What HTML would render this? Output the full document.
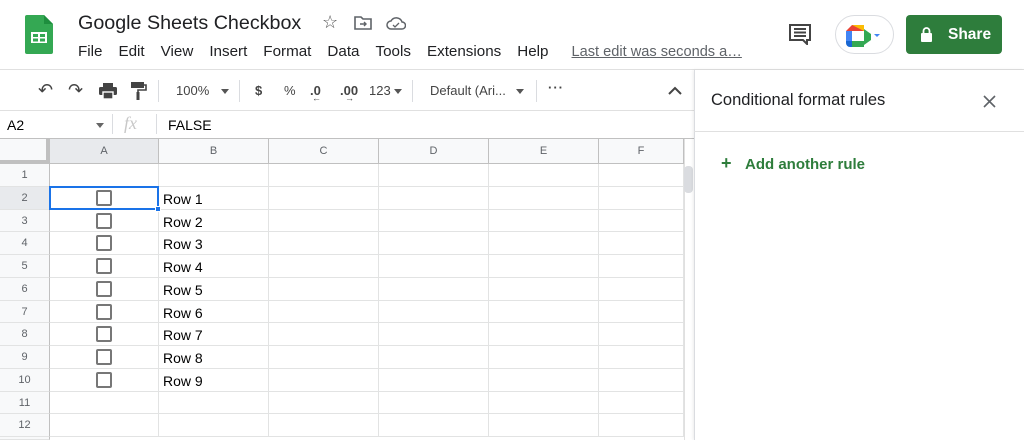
<!DOCTYPE html>
<html style="width:1024px;height:440px;overflow:hidden"><head><meta charset="utf-8"><style>
*{margin:0;padding:0;box-sizing:border-box}
body{width:1024px;height:440px;overflow:hidden;background:#fff;font-family:"Liberation Sans",Arial,sans-serif;position:relative;color:#3c4043}
.a{position:absolute}
.menu span{margin-right:16px}
.tb{font-size:13px;color:#444}
.sep{position:absolute;width:1px;background:#dadce0}
.cell{position:absolute;border-right:1px solid #e2e3e3;border-bottom:1px solid #e2e3e3}
.rh{position:absolute;left:0;width:50px;background:#f8f9fa;border-right:1px solid #c0c0c0;border-bottom:1px solid #e2e3e3;font-size:11px;color:#5f6368;text-align:center}
.ch{position:absolute;top:139px;height:25px;background:#f8f9fa;border-right:1px solid #c0c0c0;border-bottom:1px solid #c0c0c0;font-size:11px;color:#5f6368;text-align:center;line-height:24px}
.cb{position:absolute;left:96px;width:16px;height:16px;border:2px solid #777;border-radius:2px}
.rt{position:absolute;left:163px;font-size:14px;color:#000}
</style></head><body>
<svg class="a" style="left:25px;top:15px" width="28" height="39" viewBox="0 0 28 39"><path d="M2 0h17l9 9v28a2 2 0 0 1-2 2H2a2 2 0 0 1-2-2V2a2 2 0 0 1 2-2z" fill="#34a853"/><path d="M19 0v9h9z" fill="#1e8e3e"/><rect x="6" y="17" width="16" height="11" fill="#fff"/><rect x="8" y="19" width="5" height="3" fill="#34a853"/><rect x="15" y="19" width="5" height="3" fill="#34a853"/><rect x="8" y="23.5" width="5" height="3" fill="#34a853"/><rect x="15" y="23.5" width="5" height="3" fill="#34a853"/></svg>
<div class="a" style="left:78px;top:12px;font-size:19.7px;color:#202124">Google Sheets Checkbox</div>
<div class="a" style="left:322px;top:12px;font-size:18px;color:#555">☆</div>
<svg class="a" style="left:354px;top:16px" width="18" height="14" viewBox="0 0 18 14"><path d="M1 1h6l2 2h8v10H1z" fill="none" stroke="#5f6368" stroke-width="1.6"/><path d="M6 8h6M10 6l2 2-2 2" fill="none" stroke="#5f6368" stroke-width="1.4"/></svg>
<svg class="a" style="left:386px;top:16px" width="20" height="14" viewBox="0 0 20 14"><path d="M5 13a4 4 0 0 1 0-8 6 6 0 0 1 11 1 3.5 3.5 0 0 1 0 7z" fill="none" stroke="#5f6368" stroke-width="1.5"/><path d="M7 9l2 2 4-4" fill="none" stroke="#5f6368" stroke-width="1.3"/></svg>
<div class="a menu" style="left:78px;top:43px;font-size:15.2px;color:#202124;white-space:nowrap"><span>File</span><span>Edit</span><span>View</span><span>Insert</span><span>Format</span><span>Data</span><span>Tools</span><span>Extensions</span><span>Help</span><span style="margin-left:7px;color:#5f6368;text-decoration:underline;font-size:14.6px">Last edit was seconds a…</span></div>
<svg class="a" style="left:788px;top:23px" width="24" height="22" viewBox="0 0 24 22"><path d="M2 2h20v15h-3v4l-4-4H2z" fill="none" stroke="#444" stroke-width="2"/><path d="M6 6h12M6 9.5h12M6 13h12" stroke="#444" stroke-width="2"/></svg>
<div class="a" style="left:835px;top:15px;width:59px;height:39px;border:1px solid #dadce0;border-radius:20px"></div>
<svg class="a" style="left:846px;top:25px" width="34" height="22" viewBox="0 0 34 22"><path d="M0 6l6-6h12v6H6v10H0z" fill="#ea4335"/><path d="M6 0h12v6z" fill="#fbbc04"/><path d="M0 6h6v10H0z" fill="#4285f4"/><path d="M0 16h18v6H4a4 4 0 0 1-4-4z" fill="#1967d2"/><path d="M18 4v16l7-5V9z" fill="#34a853"/><path d="M6 16h12v6H6z" fill="#34a853"/><path d="M6 6h12v10H6z" fill="#fff"/><path d="M28 9l3 3 3-3z" fill="#4285f4"/></svg>
<div class="a" style="left:906px;top:15px;width:96px;height:39px;background:#2e7d3c;border-radius:4px;color:#fff;font-size:15.5px;font-weight:bold;line-height:39px;padding-left:42px">Share</div>
<svg class="a" style="left:920px;top:27px" width="13" height="15" viewBox="0 0 13 15"><rect x="1" y="6" width="11" height="9" rx="1" fill="#fff"/><path d="M3.5 6V4a3 3 0 0 1 6 0v2" fill="none" stroke="#fff" stroke-width="1.8"/></svg>
<div class="a" style="left:0;top:69px;width:1024px;height:1px;background:#e0e0e0"></div>
<div class="a tb" style="left:38px;top:80px;font-size:18px;color:#444">↶</div>
<div class="a tb" style="left:68px;top:80px;font-size:18px;color:#444">↷</div>
<svg class="a" style="left:99px;top:83px" width="18" height="16" viewBox="0 0 18 16"><rect x="4" y="0" width="10" height="4" fill="#444"/><rect x="0" y="4" width="18" height="8" rx="1.5" fill="#444"/><rect x="4" y="9" width="10" height="7" fill="#444" stroke="#fff" stroke-width="1.4"/></svg>
<svg class="a" style="left:131px;top:82px" width="16" height="18" viewBox="0 0 16 18"><rect x="0" y="0" width="13" height="6" fill="#444"/><path d="M13 3h2v5H7v3" fill="none" stroke="#444" stroke-width="1.6"/><rect x="5.5" y="10" width="3" height="8" fill="#444"/></svg>
<div class="sep" style="left:158px;top:80px;height:22px"></div>
<div class="a tb" style="left:176px;top:83px">100%</div>
<div class="a" style="left:221px;top:89px;border:4px solid transparent;border-top:5px solid #555"></div>
<div class="sep" style="left:239px;top:80px;height:22px"></div>
<div class="a tb" style="left:255px;top:83px;font-weight:bold">$</div>
<div class="a tb" style="left:284px;top:83px">%</div>
<div class="a tb" style="left:310px;top:83px;font-weight:bold">.0<span style="position:absolute;left:2px;top:10px;font-size:9px">←</span></div>
<div class="a tb" style="left:340px;top:83px;font-weight:bold">.00<span style="position:absolute;left:5px;top:10px;font-size:9px">→</span></div>
<div class="a tb" style="left:369px;top:83px">123</div>
<div class="a" style="left:394px;top:89px;border:4px solid transparent;border-top:5px solid #555"></div>
<div class="sep" style="left:412px;top:80px;height:22px"></div>
<div class="a tb" style="left:430px;top:83px">Default (Ari...</div>
<div class="a" style="left:516px;top:89px;border:4px solid transparent;border-top:5px solid #555"></div>
<div class="sep" style="left:536px;top:80px;height:22px"></div>
<div class="a tb" style="left:548px;top:80px;font-weight:bold;letter-spacing:1px">···</div>
<svg class="a" style="left:668px;top:86px" width="14" height="9" viewBox="0 0 14 9"><path d="M1 8l6-6 6 6" fill="none" stroke="#444" stroke-width="2"/></svg>
<div class="a" style="left:0;top:110px;width:694px;height:1px;background:#e0e0e0"></div>
<div class="a" style="left:7px;top:117px;font-size:14px;color:#000">A2</div>
<div class="a" style="left:96px;top:123px;border:4px solid transparent;border-top:5px solid #666"></div>
<div class="sep" style="left:112px;top:114px;height:20px"></div>
<div class="a" style="left:124px;top:113px;font-size:18px;font-style:italic;color:#c8c8c8;font-family:'Liberation Serif',serif">fx</div>
<div class="sep" style="left:156px;top:114px;height:20px"></div>
<div class="a" style="left:168px;top:117px;font-size:14px;color:#000">FALSE</div>
<div class="a" style="left:0;top:138px;width:694px;height:1px;background:#c0c0c0"></div>
<div class="a" style="left:0;top:139px;width:50px;height:25px;background:#f8f9fa;border-right:4px solid #c0c0c0;border-bottom:4px solid #c0c0c0"></div>
<div class="ch" style="left:50px;width:109px;background:#e8eaed">A</div>
<div class="ch" style="left:159px;width:110px">B</div>
<div class="ch" style="left:269px;width:110px">C</div>
<div class="ch" style="left:379px;width:110px">D</div>
<div class="ch" style="left:489px;width:110px">E</div>
<div class="ch" style="left:599px;width:85px">F</div>
<div id="g"></div>
<script>
var h='',cols=[50,159,269,379,489,599,684];
for(var r=1;r<=12;r++){var t=164+(r-1)*22.75;
h+='<div class="rh" style="top:'+t+'px;height:22.75px;line-height:22px;'+(r==2?'background:#e8eaed':'')+'">'+r+'</div>';
for(var c=0;c<6;c++)h+='<div class="cell" style="left:'+cols[c]+'px;top:'+t+'px;width:'+(cols[c+1]-cols[c])+'px;height:22.75px"></div>';
if(r>=2&&r<=10){h+='<div class="cb" style="top:'+(t+3)+'px"></div><div class="rt" style="top:'+(t+4)+'px">Row '+(r-1)+'</div>';}}
h+='<div class="rh" style="top:437px;height:3px"></div>';
document.getElementById('g').innerHTML=h;
</script>
<div class="a" style="left:49px;top:186px;width:110px;height:24px;border:2px solid #1a73e8"></div>
<div class="a" style="left:155px;top:206px;width:6px;height:6px;background:#1a73e8;border:1px solid #fff"></div>
<div class="a" style="left:684px;top:139px;width:10px;height:301px;background:#fff;border-left:1px solid #e0e0e0"></div>
<div class="a" style="left:684px;top:166px;width:9px;height:27px;background:#dadce0;border-radius:4px"></div>
<div class="a" style="left:694px;top:70px;width:330px;height:370px;background:#fff;border-left:1px solid #dadce0;box-shadow:-1px 0 3px rgba(0,0,0,.08)"></div>
<div class="a" style="left:711px;top:91px;font-size:16.5px;color:#202124">Conditional format rules</div>
<svg class="a" style="left:983px;top:95px" width="13" height="13" viewBox="0 0 13 13"><path d="M1 1l11 11M12 1L1 12" stroke="#5f6368" stroke-width="1.6"/></svg>
<div class="a" style="left:694px;top:131px;width:330px;height:1px;background:#e0e0e0"></div>
<div class="a" style="left:721px;top:153px;font-size:18px;color:#2e7d3c;font-weight:bold">+</div>
<div class="a" style="left:745px;top:156px;font-size:15px;color:#2e7d3c;font-weight:bold">Add another rule</div>
</body></html>
